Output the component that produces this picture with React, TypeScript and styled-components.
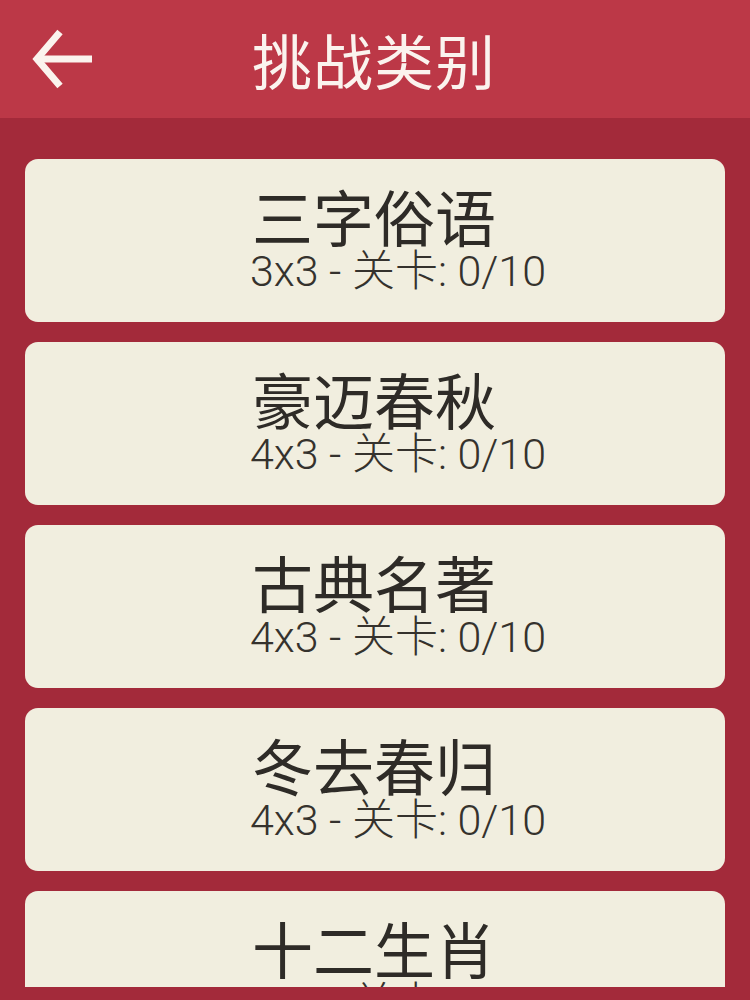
import React from "react";
import styled, { createGlobalStyle } from "styled-components";

const Global = createGlobalStyle`
  html, body { margin: 0; padding: 0; }
  body { background: #a32a3a; font-family: Roboto, "Noto Sans CJK SC", sans-serif; }
  * { box-sizing: border-box; }
`;

const Screen = styled.div`
  width: 750px;
  height: 1000px;
  display: flex;
  flex-direction: column;
  background: #a32a3a;
  overflow: hidden;
`;

const Header = styled.header`
  height: 118px;
  flex: none;
  background: #bc3847;
  display: flex;
  align-items: center;
`;

const BackButton = styled.button`
  border: none;
  background: transparent;
  padding: 0;
  margin-left: 30px;
  width: 66px;
  height: 66px;
  display: flex;
  align-items: center;
  justify-content: center;
  cursor: pointer;
`;

const Title = styled.h1`
  margin: 0 0 0 156px;
  color: #fbf3ee;
  font-family: "Noto Sans CJK SC", sans-serif;
  font-weight: 400;
  font-size: 60px;
  line-height: 1;
  letter-spacing: 1px;
`;

const List = styled.div`
  height: 869px;
  flex: none;
  overflow: hidden;
  display: flex;
  flex-direction: column;
  gap: 20px;
  padding: 41px 25px 0;
`;

const Card = styled.div`
  flex: none;
  height: 163px;
  background: #f1eedf;
  border-radius: 13px;
  display: flex;
  flex-direction: column;
  justify-content: center;
  padding-left: 227px;
  padding-bottom: 5px;
  color: #2e2b27;
`;

const CardTitle = styled.div`
  font-family: "Noto Sans CJK SC", sans-serif;
  font-weight: 400;
  font-size: 61px;
  line-height: 66px;
`;

const CardSub = styled.div`
  font-family: Roboto, "Noto Sans CJK SC", sans-serif;
  font-weight: 300;
  font-size: 43px;
  line-height: 44px;
  color: #35322d;
  margin-left: -2px;
`;

const categories = [
  { name: "三字俗语", size: "3x3" },
  { name: "豪迈春秋", size: "4x3" },
  { name: "古典名著", size: "4x3" },
  { name: "冬去春归", size: "4x3" },
  { name: "十二生肖", size: "4x3" },
];

export default function App() {
  return (
    <Screen>
      <Global />
      <Header>
        <BackButton aria-label="back">
          <svg width="62" height="60" viewBox="0 0 62 60" fill="none">
            <path d="M28 3 L5 30 L28 57" stroke="#fbf3ee" strokeWidth="7" strokeLinecap="butt" strokeLinejoin="miter" />
            <path d="M6 30 H60" stroke="#fbf3ee" strokeWidth="7" />
          </svg>
        </BackButton>
        <Title>挑战类别</Title>
      </Header>
      <List>
        {categories.map((c) => (
          <Card key={c.name}>
            <CardTitle>{c.name}</CardTitle>
            <CardSub>{c.size} - 关卡: 0/10</CardSub>
          </Card>
        ))}
      </List>
    </Screen>
  );
}
